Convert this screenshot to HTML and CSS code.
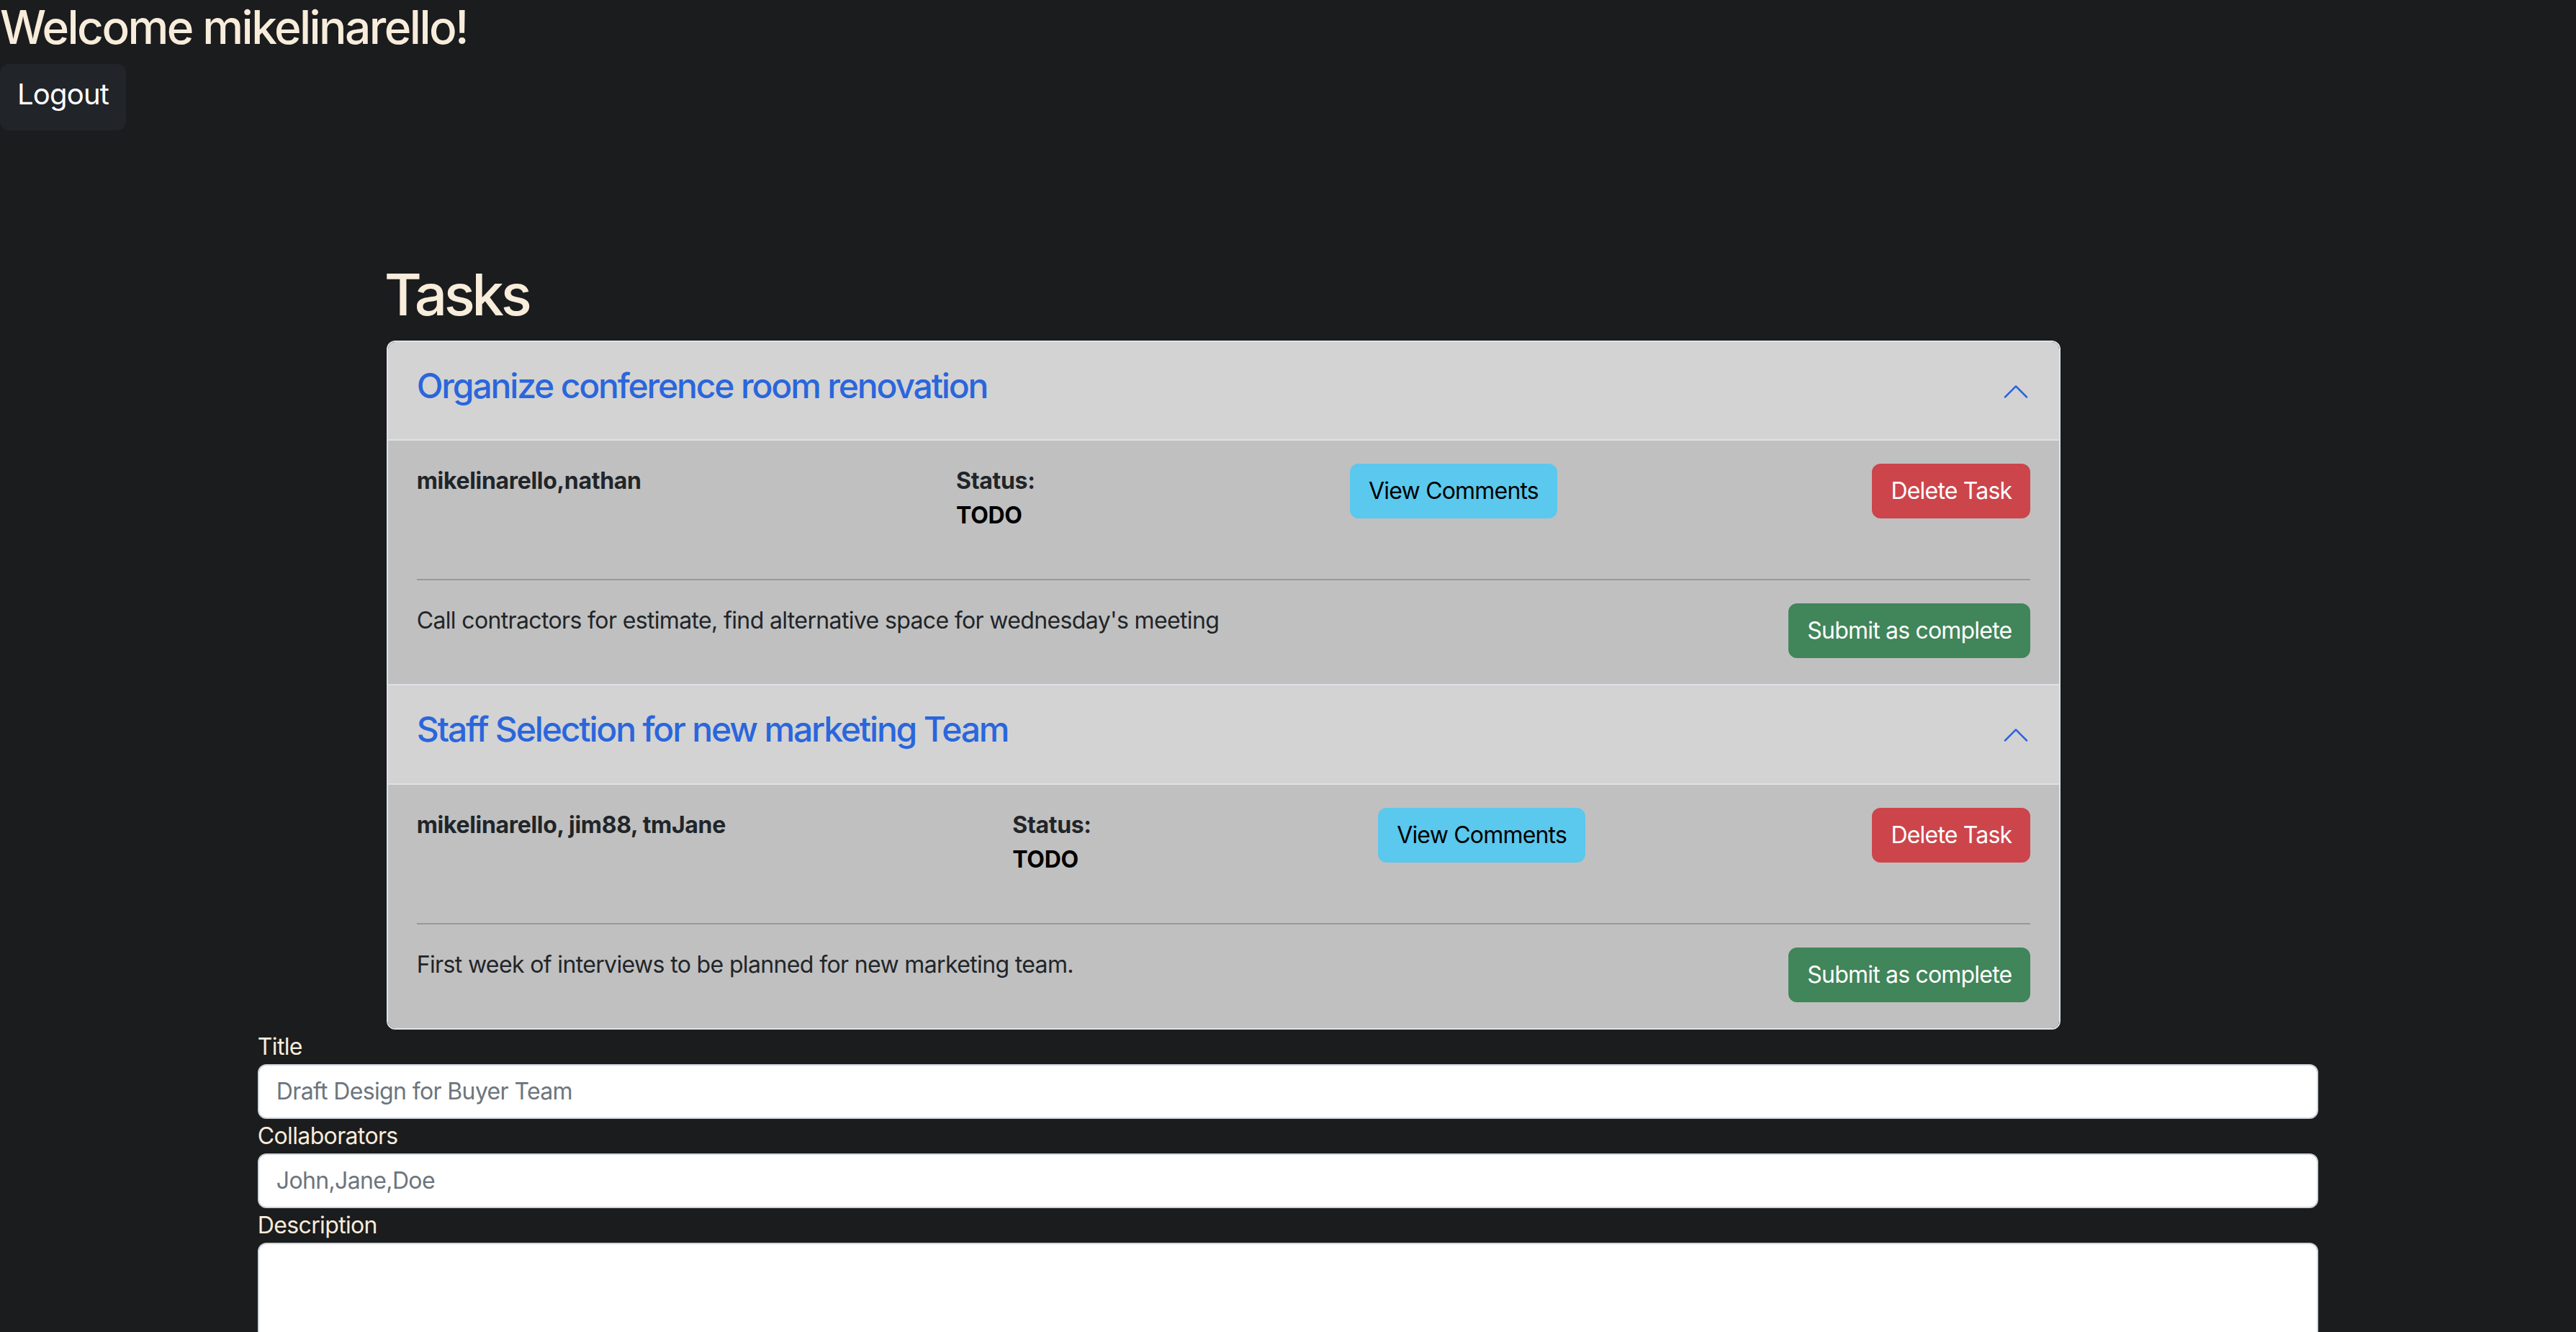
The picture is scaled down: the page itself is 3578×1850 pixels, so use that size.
FILE: index.html
```html
<!DOCTYPE html>
<html lang="en">
<head>
<meta charset="utf-8">
<title>Tasks</title>
<link rel="stylesheet" href="styles.css">
</head>
<body>
<header class="top">
  <h2 class="welcome">Welcome mikelinarello!</h2>
  <button class="btn btn-logout" type="button">Logout</button>
</header>
<main>
  <section class="tasks">
    <h1 class="tasks-title">Tasks</h1>
    <div class="accordion">
      <div class="acc-item">
        <div class="acc-header">
          <h4 class="acc-title">Organize conference room renovation</h4>
          <svg class="chev" viewBox="0 0 16 16" aria-hidden="true"><path d="M1.646 4.646a.5.5 0 0 1 .708 0L8 10.293l5.646-5.647a.5.5 0 0 1 .708.708l-6 6a.5.5 0 0 1-.708 0l-6-6a.5.5 0 0 1 0-.708z"/></svg>
        </div>
        <div class="acc-body">
          <div class="task-row">
            <p class="collab">mikelinarello,nathan</p>
            <p class="status">Status:<br><span class="todo">TODO</span></p>
            <button class="btn btn-info" type="button">View Comments</button>
            <button class="btn btn-danger" type="button">Delete Task</button>
          </div>
          <hr class="sep">
          <div class="desc-row">
            <p class="desc">Call contractors for estimate, find alternative space for wednesday's meeting</p>
            <button class="btn btn-success" type="button">Submit as complete</button>
          </div>
        </div>
      </div>
      <div class="acc-item">
        <div class="acc-header">
          <h4 class="acc-title">Staff Selection for new marketing Team</h4>
          <svg class="chev" viewBox="0 0 16 16" aria-hidden="true"><path d="M1.646 4.646a.5.5 0 0 1 .708 0L8 10.293l5.646-5.647a.5.5 0 0 1 .708.708l-6 6a.5.5 0 0 1-.708 0l-6-6a.5.5 0 0 1 0-.708z"/></svg>
        </div>
        <div class="acc-body">
          <div class="task-row">
            <p class="collab">mikelinarello, jim88, tmJane</p>
            <p class="status">Status:<br><span class="todo">TODO</span></p>
            <button class="btn btn-info" type="button">View Comments</button>
            <button class="btn btn-danger" type="button">Delete Task</button>
          </div>
          <hr class="sep">
          <div class="desc-row">
            <p class="desc">First week of interviews to be planned for new marketing team.</p>
            <button class="btn btn-success" type="button">Submit as complete</button>
          </div>
        </div>
      </div>
    </div>
  </section>
  <form class="task-form">
    <label class="form-label" for="title">Title</label>
    <input class="form-control" id="title" type="text" placeholder="Draft Design for Buyer Team">
    <label class="form-label" for="collabs">Collaborators</label>
    <input class="form-control" id="collabs" type="text" placeholder="John,Jane,Doe">
    <label class="form-label" for="desc">Description</label>
    <textarea class="form-control form-area" id="desc"></textarea>
  </form>
</main>
</body>
</html>
```

FILE: styles.css
```css
* {
  box-sizing: border-box;
}

html,
body {
  height: 100%;
}

body {
  margin: 0;
  overflow: hidden;
  background: #1b1c1e;
  color: #212529;
  font-family: Inter, "Noto Sans", "Liberation Sans", sans-serif;
  font-size: 32px;
  line-height: 1.5;
  letter-spacing: -0.02em;
}

.welcome {
  margin: 0 0 12px;
  font-size: 64px;
  font-weight: 500;
  line-height: 1.2;
  letter-spacing: -0.04em;
  color: #f8ecdb;
}

.btn {
  display: inline-block;
  font-family: inherit;
  font-size: 32px;
  font-weight: 400;
  line-height: 48px;
  letter-spacing: -0.025em;
  padding: 12px 24px;
  border: 2px solid transparent;
  border-radius: 12px;
  cursor: pointer;
  white-space: nowrap;
}

.btn-logout {
  display: block;
  font-size: 40px;
  line-height: 60px;
  letter-spacing: -0.02em;
  padding: 10px 22px 18px;
  background: #212429;
  border-color: #212429;
  color: #ffffff;
}

.tasks {
  margin: 180px 0 0 15%;
  width: 65%;
}

.tasks-title {
  margin: 0 0 16px -3px;
  font-size: 80px;
  font-weight: 500;
  line-height: 1.2;
  letter-spacing: -0.055em;
  color: #f8ecdb;
}

.accordion {
  border: 2px solid #dee2e6;
  border-radius: 12px;
  overflow: hidden;
}

.acc-item + .acc-item {
  border-top: 2px solid #dee2e6;
}

.acc-header {
  display: flex;
  align-items: center;
  padding: 32px 40px;
  background: #d3d3d3;
  box-shadow: inset 0 -2px 0 #dee2e6;
}

.acc-title {
  flex: 1;
  margin: 0 0 16px;
  font-size: 48px;
  font-weight: 500;
  line-height: 1.2;
  letter-spacing: -0.045em;
  color: #2a66dc;
}

.chev {
  flex-shrink: 0;
  width: 40px;
  height: 40px;
  margin-left: auto;
  fill: #2a66dc;
  transform: rotate(-180deg);
}

.acc-body {
  padding: 32px 40px;
  background: #c0c0c0;
}

.task-row,
.desc-row {
  display: flex;
  justify-content: space-between;
  align-items: flex-start;
}

.task-row p,
.desc-row p {
  margin: 0 0 32px;
}

.collab,
.status {
  font-weight: 700;
  letter-spacing: -0.01em;
}

.todo {
  color: #000000;
}

.btn-info {
  background: #5bc8ee;
  border-color: #5bc8ee;
  color: #000000;
}

.btn-danger {
  background: #cc454b;
  border-color: #cc454b;
  color: #ffffff;
}

.btn-success {
  background: #41855a;
  border-color: #41855a;
  color: #ffffff;
}

.sep {
  margin: 32px 0;
  border: 0;
  border-top: 2px solid #212529;
  opacity: 0.25;
}

.task-form {
  width: 80%;
  margin: 0 auto;
}

.form-label {
  display: block;
  color: #f8ecdb;
  font-size: 32px;
  line-height: 48px;
}

.form-control {
  display: block;
  width: 100%;
  margin: 0;
  padding: 12px 24px;
  font-family: inherit;
  font-size: 32px;
  line-height: 48px;
  letter-spacing: -0.02em;
  color: #212529;
  background: #ffffff;
  border: 2px solid #ced4da;
  border-radius: 12px;
}

.form-control::placeholder {
  color: #6c757d;
}

.form-area {
  height: 240px;
  resize: vertical;
}
```
